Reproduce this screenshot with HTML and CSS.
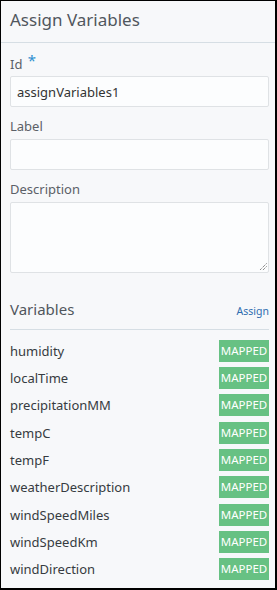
FILE: index.html
```html
<!DOCTYPE html>
<html>
<head>
<meta charset="utf-8">
<link rel="stylesheet" href="styles.css">
</head>
<body>
<div class="panel">
  <div class="header">Assign Variables</div>
  <div class="form">
    <div class="field">
      <div class="label first">Id <span class="req">*</span></div>
      <div class="input">assignVariables1</div>
    </div>
    <div class="field">
      <div class="label">Label</div>
      <div class="input"></div>
    </div>
    <div class="field">
      <div class="label">Description</div>
      <div class="textarea">
        <svg class="grip" width="10" height="10" viewBox="0 0 10 10"><path d="M9.5 2.5 L2.5 9.5 M9.5 5.5 L5.5 9.5" stroke="#555" stroke-width="1" stroke-dasharray="1 1"/></svg>
      </div>
    </div>
    <div class="vars-head">
      <div class="vars-title">Variables</div>
      <a class="assign">Assign</a>
    </div>
    <div class="vars">
      <div class="row"><span class="name">humidity</span><span class="badge">MAPPED</span></div>
      <div class="row"><span class="name">localTime</span><span class="badge">MAPPED</span></div>
      <div class="row"><span class="name">precipitationMM</span><span class="badge">MAPPED</span></div>
      <div class="row"><span class="name">tempC</span><span class="badge">MAPPED</span></div>
      <div class="row"><span class="name">tempF</span><span class="badge">MAPPED</span></div>
      <div class="row"><span class="name">weatherDescription</span><span class="badge">MAPPED</span></div>
      <div class="row"><span class="name">windSpeedMiles</span><span class="badge">MAPPED</span></div>
      <div class="row"><span class="name">windSpeedKm</span><span class="badge">MAPPED</span></div>
      <div class="row"><span class="name">windDirection</span><span class="badge">MAPPED</span></div>
    </div>
  </div>
</div>
</body>
</html>
```
FILE: styles.css
```css
* { box-sizing: border-box; }
html, body { margin: 0; padding: 0; }
body { font-family: "Noto Sans", "Open Sans", sans-serif; background: #f7f8fa; }
.panel {
  width: 277px; height: 590px;
  border-top: 1px solid #000; border-left: 1px solid #000;
  border-right: 2px solid #000; border-bottom: 2px solid #000;
  background: #f7f8fa; overflow: hidden;
}
.header {
  height: 42px; padding: 7px 9px 0;
  font-size: 17px; color: #50565d;
  border-bottom: 1px solid #d6dee4;
}
.form { padding: 0 6px 0 9px; }
.field { display: flex; flex-direction: column; }
.label { font-size: 13px; color: #5b6067; height: 32px; padding-top: 9px; line-height: 20px; }
.label.first { height: 33px; padding-top: 10px; }
.req { color: #2f8fd0; font-size: 15px; position: relative; top: -3px; margin-left: 2px; }
.input {
  height: 31px; background: #fcfdfe; border: 1px solid #dfe2e5; border-radius: 2px;
  font-size: 13px; color: #333; padding: 5px 6px; line-height: 20px;
}
.textarea {
  height: 71px; background: #fcfdfe; border: 1px solid #dfe2e5; border-radius: 2px;
  display: flex; justify-content: flex-end; align-items: flex-end; padding: 1px;
}
.vars-head {
  height: 57px; display: flex; justify-content: space-between; align-items: baseline;
  padding-top: 26px; border-bottom: 1px solid #d6dee4;
}
.vars-title { font-size: 15px; color: #50565d; line-height: 20px; }
.assign { font-size: 10.5px; color: #2f6db0; line-height: 20px; }
.vars { padding-top: 7px; }
.row { display: flex; justify-content: space-between; align-items: center; height: 27.33px; }
.name { font-size: 13px; color: #363b41; }
.badge {
  width: 50px; height: 22px; background: #67c183; color: #fff;
  font-size: 11.5px; line-height: 22px; text-align: center;
}
```
